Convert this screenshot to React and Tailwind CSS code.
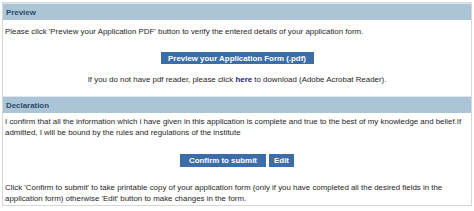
import React from 'react';

const Header = ({ children }) => (
  <div className="bg-[#abc5d7] border-t border-[#dfe6ec] px-[3px] h-[17px] flex items-center text-[#2d4a6a] font-bold">
    {children}
  </div>
);

const Btn = ({ children, className = '' }) => (
  <button className={`bg-[#3c6da6] text-white font-bold flex items-center justify-center ${className}`}>
    {children}
  </button>
);

export default function App() {
  return (
    <div
      className="w-[474px] h-[211px] bg-white p-[2px] text-[7.9px] leading-[11px] text-[#262626]"
      style={{ fontFamily: '"Liberation Sans", Arial, sans-serif' }}
    >
      <div className="border border-[#d4d8dc] h-[204px] flex flex-col">
        {/* Preview */}
        <Header>Preview</Header>
        <div className="px-[2px] pt-[6px]">
          Please click 'Preview your Application PDF' button to verify the entered details of your application form.
        </div>
        <div className="flex justify-center mt-[15px]">
          <Btn className="w-[153px] h-[12px]">Preview your Application Form (.pdf)</Btn>
        </div>
        <div className="text-center mt-[10px]">
          If you do not have pdf reader, please click <span className="text-[#1a1a8c] font-bold">here</span> to download (Adobe Acrobat Reader).
        </div>

        {/* Declaration */}
        <div className="mt-[11px]">
          <Header>Declaration</Header>
        </div>
        <div className="px-[2px] pt-[3px]">
          I confirm that all the information which i have given in this application is complete and true to the best of my knowledge and belief.If admitted, I will be bound by the rules and regulations of the institute
        </div>
        <div className="flex justify-center gap-[3px] mt-[16px]">
          <Btn className="w-[86px] h-[13px]">Confirm to submit</Btn>
          <Btn className="w-[25px] h-[13px]">Edit</Btn>
        </div>
        <div className="px-[2px] mt-[15px]">
          Click 'Confirm to submit' to take printable copy of your application form (only if you have completed all the desired fields in the application form) otherwise 'Edit' button to make changes in the form.
        </div>
      </div>
    </div>
  );
}
